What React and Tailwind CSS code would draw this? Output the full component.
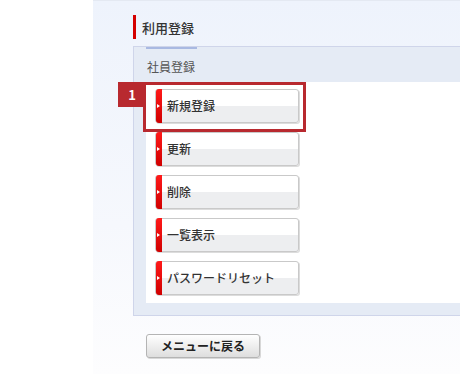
import React from "react";

const menuItems = ["新規登録", "更新", "削除", "一覧表示", "パスワードリセット"];

const MenuButton = ({ label }) => (
  <button className="relative flex items-center w-[144px] h-[34px] rounded-[3px] border border-[#c9c9c9] shadow-[1px_1px_0_0_#dcdcdc] bg-[linear-gradient(to_bottom,#ffffff_0%,#ffffff_50%,#edeef0_50%,#edeef0_100%)] text-left">
    <span className="absolute left-0 top-[-1px] bottom-[-1px] w-[6px] rounded-l-[3px] bg-[linear-gradient(to_bottom,#ff1a1a,#d00000)] flex items-center">
      <span className="ml-[1px] w-0 h-0 border-y-[2.5px] border-y-transparent border-l-[3px] border-l-white" />
    </span>
    <span className="pl-[11px] text-[12px] font-medium text-[#333]">{label}</span>
  </button>
);

const App = () => {
  return (
    <div
      className="w-[460px] h-[374px] overflow-hidden bg-white flex"
      style={{ fontFamily: '"Noto Sans CJK JP", "Noto Sans", sans-serif' }}
    >
      <div className="w-[93px] shrink-0 bg-white" />
      <div className="flex-1 flex flex-col pl-[40px] pt-[14px] border-t border-[#e4e9f2] bg-[linear-gradient(to_bottom,#eef3fc_0%,#f6f8fd_60%,#fdfdfe_100%)]">
        <div className="flex items-center h-[24px] border-l-[3px] border-[#d40000] pl-[6px]">
          <h1 className="text-[13px] font-medium text-[#333] leading-none">利用登録</h1>
        </div>

        <div className="mt-[7px] w-[420px] border border-[#cfd5ea] bg-[#e5ebf5] pl-[12px] pb-[12px]">
          <div className="relative h-[35px] flex items-center">
            <span className="absolute top-0 left-0 w-[51px] h-[2px] bg-[#a9b9e2]" />
            <span className="pl-[1px] pt-[4px] text-[12px] text-[#555]">社員登録</span>
          </div>
          <div className="relative bg-white pl-[9px] pt-[7px] pb-[8px] flex flex-col gap-[9px]">
            <div className="absolute left-[-3px] top-0 w-[163px] h-[50px] border-[3px] border-[#b8292f] pointer-events-none">
              <span className="absolute left-[-28px] top-[-3px] w-[28px] h-[25px] bg-[#b8292f] text-white text-[13px] font-bold flex items-center justify-center leading-none">
                1
              </span>
            </div>
            {menuItems.map((item) => (
              <MenuButton key={item} label={item} />
            ))}
          </div>
        </div>

        <div className="mt-[16px] pl-[13px]">
          <button className="w-[114px] h-[24px] rounded-[3px] border border-[#b4b4b4] shadow-[1px_1px_0_0_#d8d8d8] bg-[linear-gradient(to_bottom,#ffffff,#dedede)] text-[12px] font-bold text-[#222] leading-none">
            メニューに戻る
          </button>
        </div>
      </div>
    </div>
  );
};

export default App;
